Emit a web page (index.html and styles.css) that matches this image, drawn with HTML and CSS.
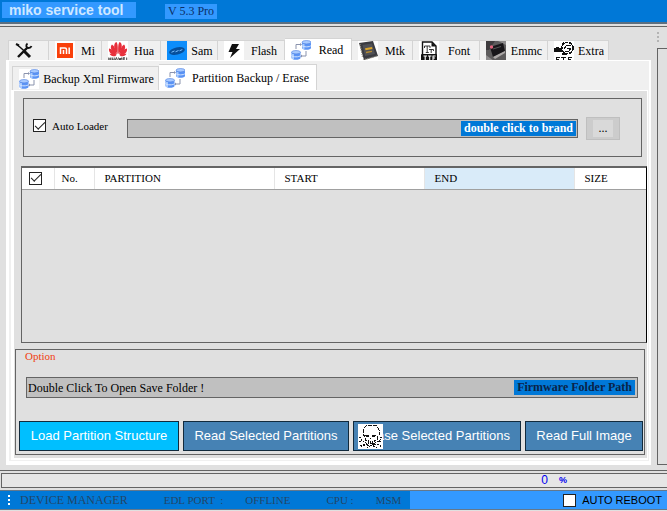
FILE: index.html
```html
<!DOCTYPE html>
<html lang="en">
<head>
<meta charset="utf-8">
<title>miko service tool</title>
<link rel="stylesheet" href="styles.css">
</head>
<body>
<svg class="defs" aria-hidden="true">
  <symbol id="db-link" viewBox="0 0 20 20">
    <rect width="20" height="20" fill="#fff"/>
    <path d="M5 9V4.500H10M15 11v5H10" fill="none" stroke="#8a93ad" stroke-width="1"/>
    <path d="M9 3l2 1.500-2 1.500zM11 14.500L9 16l2 1.500z" fill="#8a93ad"/>
    <path d="M11 2v6c0 2.400 9 2.400 9 0V2zM.5 12v6c0 2.400 9 2.400 9 0v-6z" fill="#5b94f5"/>
    <path d="M12.500 4v5M2 14v5" stroke="#a9ccff" stroke-width="2"/>
    <path d="M11 5.500c1 1.800 8 1.800 9 0M.5 15.500c1 1.800 8 1.800 9 0" fill="none" stroke="#d5e5ff"/>
    <ellipse cx="15.500" cy="2.200" rx="4.500" ry="1.700" fill="#a9cbff" stroke="#4b7ee0" stroke-width=".6"/>
    <ellipse cx="5" cy="12.200" rx="4.500" ry="1.700" fill="#a9cbff" stroke="#4b7ee0" stroke-width=".6"/>
  </symbol>
</svg>

<header class="titlebar">
  <h1 class="app-name">miko service tool</h1>
  <span class="version">V 5.3 Pro</span>
</header>

<div class="workspace">
  <main class="main">
    <nav class="tabs" aria-label="Tools">
      <button class="tab" aria-label="Tools">
        <svg class="icon" viewBox="0 0 20 20"><g fill="none" stroke="#111"><path d="M2.500 4l8 7" stroke-width="1.500"/><path d="M9.500 10.500l5.500 5.500" stroke-width="3"/><path d="M13 6L3 16" stroke-width="2.400"/><path d="M12.500 2.500c-2 1.500-1.500 4.500 1 4.500 1.500 0 2.500-.5 3-2" stroke-width="1.800"/><path d="M1 3l3 1.500" stroke-width="2"/></g></svg>
      </button>
      <button class="tab">
        <svg class="icon" viewBox="0 0 20 20"><path fill="#fff" d="M0 0h20v20H0z"/><path fill="#f9400b" d="M2 2h16v15H2z"/><path d="M5.500 13V7h4.500q1.500 0 1.500 1.500V13M8.500 9v4M14.200 6.500V13" fill="none" stroke="#fff" stroke-width="1.500"/></svg>
        <span class="tab-label">Mi</span>
      </button>
      <button class="tab">
        <svg class="icon" viewBox="0 0 20 20"><path fill="#fff" d="M0 0h20v20H0z"/><g fill="#e8303c"><path d="M9.600 13C5 8 5.500 2 8.500 1c1.500 2 1.500 7 1.100 12zM10.400 13C15 8 14.500 2 11.500 1c-1.500 2-1.500 7-1.100 12z"/><path d="M9 13.500C3 11 1.500 6 4 3.500 6.500 5 8 9 9 13.500zM11 13.500c6-2.500 7.500-7.500 5-10C13.500 5 12 9 11 13.500z"/><path d="M8.500 14C3 14.500.5 11 1 7.500 4 8 7 11 8.500 14zM11.500 14c5.500.5 8-3 7.500-6.500-3 .5-6 3.500-7.500 6.500z"/><path d="M8.500 14.700C5 16 2.500 15 1.500 12.800 4 12.500 7 13.300 8.500 14.700zM11.500 14.700c3.500 1.300 6 .3 7-1.900-2.500-.3-5.500.5-7 1.900z"/></g><g stroke="#333" stroke-width=".9" fill="none"><path d="M.8 16.500v3M2.800 16.500v3M.8 18h2M4.300 16.500v2.500h1.900v-2.500M7.200 19.500l1.200-3 1.200 3M10.500 16.500l.8 2.700.8-2.200.8 2.200.8-2.700M17 16.800h-2v2.500h2M15 18h2M18.700 16.500v3"/></g></svg>
        <span class="tab-label">Hua</span>
      </button>
      <button class="tab">
        <svg class="icon" viewBox="0 0 20 20"><path fill="#0d8dfb" d="M0 0h20v20H0z"/><ellipse cx="10" cy="10" rx="8" ry="3.600" fill="#064f9c" transform="rotate(-12 10 10)"/><path d="M4.500 11.300l3-1.400M8.500 10.800l3-1.300M12.500 9.800l2.800-1.200" stroke="#7cc0ff"/></svg>
        <span class="tab-label">Sam</span>
      </button>
      <button class="tab">
        <svg class="icon" viewBox="0 0 20 20"><path fill="#fff" d="M0 0h20v20H0z"/><path d="M8 3h7l-3 5h4L6 17l2.500-6H4.500z" fill="#111"/></svg>
        <span class="tab-label">Flash</span>
      </button>
      <button class="tab selected">
        <svg class="icon"><use href="#db-link"/></svg>
        <span class="tab-label">Read</span>
      </button>
      <button class="tab">
        <svg class="icon" viewBox="0 0 20 20"><path fill="#fff" d="M0 0h20v20H0z"/><path d="M1 2L15 0l5 15-14 4z" fill="#3a3b41"/><path d="M2 3l2.500 13M5 19l14-4" stroke="#9c9788" stroke-width="1.200" stroke-dasharray="1 1"/><path d="M4.500 4L14 2.500l3 10.500-10 2z" fill="#505156"/><path d="M7 7.200l7-1.200.5 2-7 1.200z" fill="#dba52b"/><path d="M8 11.500l6-1.200" stroke="#b88d32" stroke-width="1.300"/></svg>
        <span class="tab-label">Mtk</span>
      </button>
      <button class="tab">
        <svg class="icon" viewBox="0 0 20 20"><path fill="#fff" d="M0 0h20v20H0z"/><path d="M3.500 14V1h9.500l4 4v9" fill="#fff" stroke="#111" stroke-width="1.400"/><path d="M12.500 1v4.500h4.500z" fill="#111"/><path d="M5.500 7V5H11v2M8.200 5v6.500M6.800 11.500h3M10 8.500h4.500v1.500M12.200 8.500V12" fill="none" stroke="#222" stroke-width=".9"/><rect x="2" y="13" width="16" height="7" rx="1" fill="#111"/><path d="M4.500 15h3.500M6.200 15v4M9 15h3.500M10.700 15v4M14 19v-4h2.500M14 17h2" fill="none" stroke="#fff" stroke-width="1.100"/></svg>
        <span class="tab-label">Font</span>
      </button>
      <button class="tab">
        <svg class="icon" viewBox="0 0 20 20"><path fill="#5d5b5c" d="M0 0h20v20H0z"/><path fill="#8d8b8c" d="M0 14l8 6H0zM12 0h8v4z"/><path fill="#3e3b3e" d="M0 0h9L3 9H0z"/><path d="M4 6l13-4 2 8-12 6z" fill="#171519"/><path d="M7 16l12-6v2L9 18z" fill="#aaa6a6"/><path d="M7 8l8-2.500" stroke="#555" /><circle cx="5.500" cy="6" r="1.700" fill="#e0647d"/></svg>
        <span class="tab-label">Emmc</span>
      </button>
      <button class="tab">
        <svg class="icon" viewBox="0 0 20 20" shape-rendering="crispEdges"><path fill="#fff" d="M0 0h20v20H0z"/><path d="M0 7h8v4H0zM2 6h3v1H2zM8 12h3v2H8z" fill="#111"/><circle cx="13.500" cy="7" r="5.700" fill="#fff" stroke="#111" stroke-width="1.500" stroke-dasharray="3 1"/><path d="M10 8l3-4h4M11 10h4l2-3h-4M8 3l2-2M9 13l4 1" stroke="#111" fill="none"/><path d="M6 16.500H2V20M2 18.500h3M7 16.500h5M9.500 16v4M18 16.500h-4V20M14 18.500h3" stroke="#111" fill="none"/></svg>
        <span class="tab-label">Extra</span>
      </button>
    </nav>

    <div class="page">
      <nav class="tabs subtabs" aria-label="Read">
        <button class="tab">
          <svg class="icon"><use href="#db-link"/></svg>
          <span class="tab-label">Backup Xml Firmware</span>
        </button>
        <button class="tab selected">
          <svg class="icon"><use href="#db-link"/></svg>
          <span class="tab-label">Partition Backup / Erase</span>
        </button>
      </nav>

      <div class="subpage">
        <section class="loader">
          <label class="check-label"><input class="check" type="checkbox" checked>Auto Loader</label>
          <div class="path-box">
            <input class="path-input" type="text" aria-label="Loader path" readonly>
            <span class="badge">double click to brand</span>
          </div>
          <button class="browse">...</button>
        </section>

        <div class="partitions">
          <table class="list">
            <colgroup>
              <col class="col-check"><col class="col-no"><col class="col-partition"><col class="col-range"><col class="col-range"><col>
            </colgroup>
            <thead>
              <tr>
                <th><input class="check" type="checkbox" aria-label="Select all" checked></th>
                <th>No.</th>
                <th>PARTITION</th>
                <th>START</th>
                <th class="hot">END</th>
                <th>SIZE</th>
              </tr>
            </thead>
            <tbody></tbody>
          </table>
        </div>

        <fieldset class="option">
          <legend class="option-title">Option</legend>
          <div class="path-box save-box">
            <input class="path-input" type="text" aria-label="Save folder" value="Double Click To Open Save Folder !" readonly>
            <span class="badge badge-dark">Firmware Folder Path</span>
          </div>
          <div class="actions">
            <button class="action primary">Load Partition Structure</button>
            <button class="action">Read Selected Partitions</button>
            <button class="action erase">Erase Selected Partitions
              <svg class="skull" viewBox="0 0 25 25" shape-rendering="crispEdges"><path fill="#fff" d="M0 0h25v25H0z"/><path d="M7 13l-2-3V6l3-4 3-1h5l3 1 2 4v5l-2 3v2h-3v3h-6v-3H7z" fill="none" stroke="#111" stroke-dasharray="4 1"/><path d="M7 11h4v2H8zM14 11h4l-1 2h-3zM12 14h1v1h-1zM10 17v2h1v-2M12 17v2h1v-2M14 17v2h1v-2" fill="#111"/><path d="M1 13l2 1v2l7 4-6 1-1 3M24 13l-2 1v2l-8 5-5 3M1 17h3M21 17h3M2 22l5-1M16 20l6 1v3M15 22l4 2M9 21h7" fill="none" stroke="#111" stroke-dasharray="2 1"/></svg>
            </button>
            <button class="action">Read Full Image</button>
          </div>
        </fieldset>
      </div>
    </div>
  </main>

  <aside class="side">
    <span class="grip"></span>
    <div class="side-panel"></div>
  </aside>
</div>

<div class="progress-row">
  <div class="progress"><span>0</span><span class="percent">%</span></div>
</div>

<footer class="status">
  <div class="status-info">
    <span class="grip grip-light"></span>
    <span class="device">DEVICE MANAGER</span>
    <span>EDL PORT &nbsp;:</span>
    <span>OFFLINE</span>
    <span class="cpu">CPU :</span>
    <span>MSM</span>
  </div>
  <label class="reboot"><input class="check" type="checkbox">AUTO REBOOT</label>
</footer>
</body>
</html>
```

FILE: styles.css
```css
* {
  box-sizing: border-box;
}

body {
  margin: 0;
  min-height: 100vh;
  display: flex;
  flex-direction: column;
  background: #e0e0e0;
  color: #000;
  font: 12px/14px "Liberation Serif", "Times New Roman", serif;
}

button,
input {
  font: inherit;
  color: inherit;
  margin: 0;
}

.defs {
  position: absolute;
  width: 0;
  height: 0;
}

/* Title bar */
.titlebar {
  display: flex;
  align-items: flex-start;
  gap: 29px;
  height: 24px;
  padding: 2px;
  background: #0078d7;
  border-bottom: 2px solid #5c6f80;
}

.app-name {
  margin: 0;
  padding: 0 7px;
  width: 134px;
  background: #3399ff;
  color: #cfe8ff;
  font: bold 14px/16px "Liberation Sans", Arial, sans-serif;
}

.version {
  margin-top: 2px;
  padding: 0 3px;
  background: #3399ff;
  color: #0a2f66;
  line-height: 15px;
}

/* Workspace */
.workspace {
  flex: 1;
  display: flex;
  gap: 6px;
  margin-top: 2px;
  padding: 11px 0 5px 6px;
  border-top: 1px solid #646464;
  border-bottom: 1px solid #646464;
}

.main {
  flex: 1;
  display: flex;
  flex-direction: column;
}

.tabs {
  display: grid;
  grid-template-columns: 41px 53px 59px 57px 67px 67px 61px 67px 68px 61px;
  align-items: end;
  height: 22px;
  margin-left: 2px;
}

.tab {
  display: flex;
  align-items: center;
  height: 20px;
  padding: 0 2px 0 6px;
  border: 1px solid #d4d4d4;
  border-width: 1px 1px 0 0;
  background: #f0f0f0;
  white-space: nowrap;
}

.tab:first-child {
  border-left-width: 1px;
}

.tab.selected {
  height: 22px;
  background: #fff;
}

.icon {
  flex: none;
  width: 20px;
  height: 20px;
}

.tab-label {
  flex: 1;
  padding-left: 2px;
  text-align: center;
}

.page {
  flex: 1;
  display: flex;
  flex-direction: column;
  padding: 3px 1px 1px 2px;
  background: #f0f0f0;
  border: 1px solid #fff;
  border-width: 1px 2px 4px 3px;
}

.subtabs {
  grid-template-columns: 147px 158px;
  height: 26px;
  margin-left: 1px;
}

.subtabs .tab {
  height: 24px;
}

.subtabs .tab.selected {
  height: 26px;
}

.subpage {
  flex: 1;
  display: flex;
  flex-direction: column;
  padding: 7px 0 3px 1px;
  border: 1px solid #fff;
  border-width: 1px 1px 2px 3px;
  background: #e0e0e0;
}

/* Check boxes */
.check {
  appearance: none;
  flex: none;
  display: grid;
  place-items: center;
  width: 13px;
  height: 13px;
  border: 1px solid #222;
  background: #fff;
}

.check:checked::after {
  content: "";
  width: 9px;
  height: 4px;
  margin-bottom: 3px;
  border: solid #222;
  border-width: 0 0 1px 1px;
  transform: rotate(-45deg);
}

/* Loader */
.loader {
  display: flex;
  align-items: center;
  gap: 8px;
  height: 59px;
  margin: 0 5px 0 8px;
  padding: 1px 21px 0 9px;
  border: 1px solid #646464;
}

.check-label {
  display: flex;
  align-items: center;
  gap: 6px;
  width: 86px;
  margin-bottom: 5px;
  font-size: 11px;
  white-space: nowrap;
}

.path-box {
  flex: 1;
  display: flex;
  align-items: center;
  height: 19px;
  padding-right: 1px;
  border: 1px solid #646464;
  background: #c0c0c0;
}

.path-input {
  flex: 1;
  min-width: 0;
  padding: 0 1px;
  border: 0;
  background: transparent;
}

.badge {
  padding: 0 3px;
  background: #0078d7;
  color: #fff;
  font-weight: bold;
  line-height: 15px;
}

.badge-dark {
  margin-right: 1px;
  color: #0a2347;
}

.browse {
  width: 34px;
  height: 23px;
  padding: 0;
  border: 1px solid #bfbfbf;
  background: linear-gradient(#d9d9d9, #d9d9d9) center / 20px 17px no-repeat #cccccc;
}

/* Partition list */
.partitions {
  flex: 1;
  margin: 9px 0 0 6px;
  border: 1px solid #646464;
  border-top-width: 2px;
  border-right-color: #000;
}

.list {
  width: 100%;
  table-layout: fixed;
  border-collapse: collapse;
}

.list th {
  height: 21px;
  padding: 0 0 0 10px;
  background: #fff;
  border-right: 1px solid #e5e5e5;
  border-bottom: 1px solid #a0a0a0;
  font-size: 11px;
  font-weight: normal;
  text-align: left;
}

.list th:first-child,
.list th:nth-child(2) {
  padding-left: 7px;
}

.list th.hot {
  background: #d9ebf9;
}

.list th:last-child {
  border-right: 0;
}

.col-check {
  width: 32px;
}

.col-no {
  width: 40px;
}

.col-partition {
  width: 180px;
}

.col-range {
  width: 150px;
}

/* Option group */
.option {
  min-width: 0;
  margin: 6px 2px 0 0;
  padding: 0 1px 3px 3px;
  border: 1px solid #646464;
}

.option-title {
  float: left;
  width: 100%;
  margin-bottom: 15px;
  padding: 0 6px;
  color: #f04010;
  font-size: 11px;
  line-height: 12px;
}

.save-box {
  clear: both;
  height: 21px;
  margin: 0 5px 23px 7px;
}

.actions {
  display: grid;
  grid-template-columns: 160fr 166fr 168fr 118fr;
  gap: 4px;
}

.action {
  position: relative;
  height: 30px;
  padding: 0;
  border: 1px solid #122a3c;
  background: #4682b4;
  color: #fff;
  font: 13px/16px "Liberation Sans", Arial, sans-serif;
  white-space: nowrap;
}

.action.primary {
  background: #00bfff;
}

.skull {
  position: absolute;
  left: 4px;
  top: 2px;
  width: 25px;
  height: 25px;
}

/* Side strip */
.side {
  display: flex;
  flex-direction: column;
  gap: 5px;
  width: 10px;
  margin-top: -6px;
  overflow: hidden;
}

.grip {
  width: 2px;
  height: 11px;
  background: repeating-linear-gradient(#b4b4b4 0 2px, transparent 2px 4px);
}

.grip-light {
  background: repeating-linear-gradient(#fff 0 2px, transparent 2px 4px);
}

.side-panel {
  flex: 1;
  border: 1px solid #646464;
  border-right: 0;
}

/* Progress */
.progress-row {
  padding: 2px 0 2px 1px;
}

.progress {
  display: flex;
  justify-content: flex-end;
  align-items: center;
  gap: 11px;
  height: 15px;
  padding-right: 100px;
  border: 1px solid #646464;
  border-right: 0;
  background: #e6e6e6;
  color: #0000f0;
  font: 12px/13px "Liberation Sans", Arial, sans-serif;
}

.percent {
  font-size: 9px;
  font-weight: bold;
}

/* Status bar */
.status {
  display: flex;
  justify-content: space-between;
  height: 20px;
  margin-bottom: 1px;
  border: 1px solid #64788c;
  border-width: 1px 0;
  background: #3399ff;
  font-size: 11px;
}

.status-info {
  display: flex;
  align-items: center;
  gap: 22px;
  width: 410px;
  padding-left: 8px;
  background: #0078d7;
  color: #224668;
  white-space: nowrap;
}

.device {
  margin: 0 14px 0 -12px;
  font-size: 12px;
}

.cpu {
  margin-left: 14px;
}

.reboot {
  display: flex;
  align-items: center;
  gap: 6px;
  padding-right: 5px;
  font-family: "Liberation Sans", Arial, sans-serif;
}
```
